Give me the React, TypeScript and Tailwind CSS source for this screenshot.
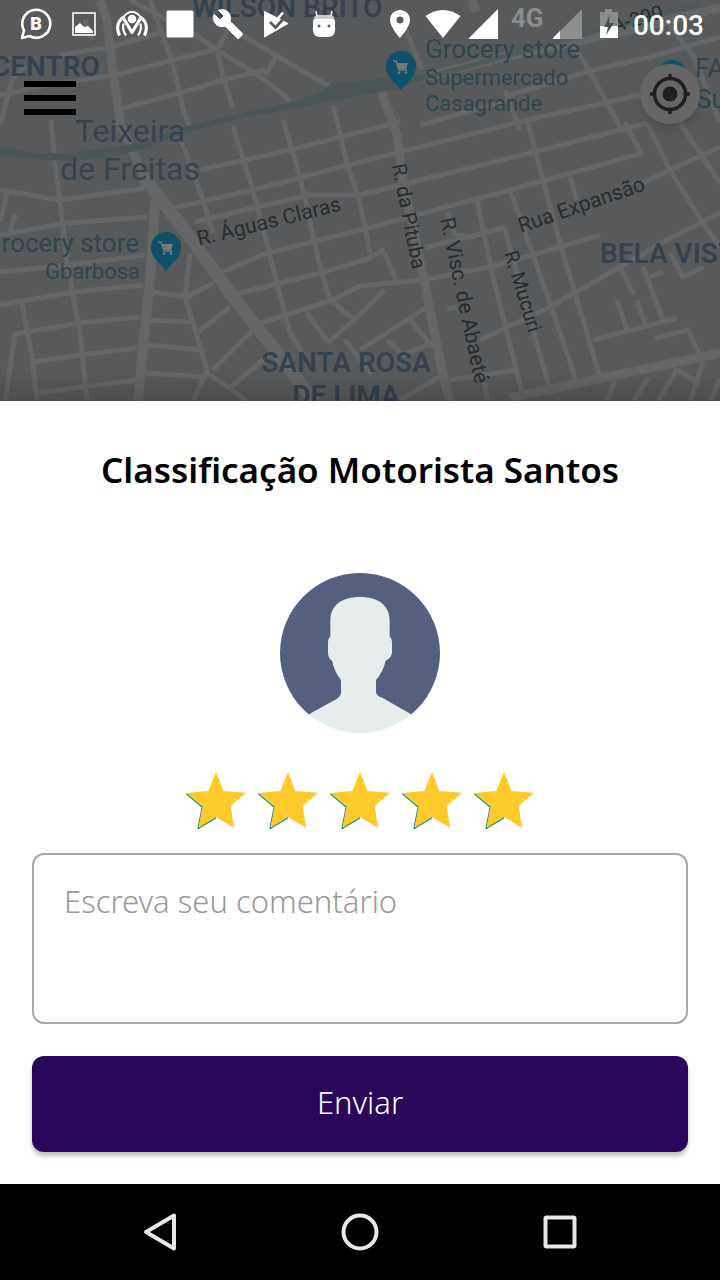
import React, { useState } from "react";

const ROADS = [
  // north west
  "M60 55 110 47 160 33",
  "M0 95 60 83 115 75 165 62 217 49",
  "M120 109 180 93 223 80 265 70",
  "M150 0 162 33 173 65 184 112 190 128",
  "M25 65 12 80 0 125",
  "M217 50 224 80 233 108",
  "M130 0 200 38 217 50 262 78 284 95 290 102",
  "M225 25 280 58 329 86 322 95",
  "M275 58 265 75",
  "M228 30 217 50",
  "M85 20 92 40",
  "M51 120 55 163 60 200 67 263 80 333 87 402",
  // west
  "M0 190 60 200 147 188",
  "M0 235 67 223 147 217",
  "M0 272 70 265 145 255",
  "M0 305 73 292 143 285",
  "M27 332 80 323 140 317",
  "M33 362 80 355 137 348",
  "M37 393 137 380",
  "M22 303 33 363 37 402",
  "M7 193 0 222",
  "M15 215 10 233",
  "M27 332 15 334 5 402",
  // centre
  "M180 137 203 200 213 233",
  "M233 127 253 190 277 283 290 333 302 352",
  "M283 120 300 177 320 267 330 300 355 320",
  "M333 105 338 125 347 163 360 203 370 253",
  "M200 170 290 150 400 122",
  "M173 208 253 190 360 162 527 120 640 95",
  "M195 222 253 208 310 195 360 195 530 153 647 123",
  "M220 273 267 253 360 230 510 190 643 153",
  "M233 295 320 273 370 258",
  "M260 323 333 300 360 286 423 280 490 267 560 247 600 235",
  "M197 333 230 307",
  "M213 370 253 330",
  "M153 292 187 297 213 283",
  "M190 253 185 297 207 370 193 402",
  "M150 320 190 322",
  "M148 345 200 350",
  "M146 373 207 377",
  "M207 373 230 388 248 402",
  "M230 388 272 352",
  "M307 313 328 342",
  "M328 343 365 310 384 290",
  "M345 340 372 375",
  "M360 350 427 307",
  "M410 320 433 347",
  "M387 340 403 355 432 343",
  "M400 400 443 375",
  "M450 380 517 370",
  "M487 402 485 383",
  "M362 262 383 250 396 280",
  "M447 309 457 307",
  // east
  "M527 120 560 243 600 377",
  "M477 200 493 277 523 397",
  "M510 190 550 303 577 383",
  "M505 230 530 320 550 390",
  "M447 212 455 235 475 237",
  "M425 248 507 227",
  "M480 340 550 307 620 267 667 240 720 213",
  "M593 340 677 318",
  "M643 183 670 170 720 147",
  "M647 123 670 170 703 223 720 247",
  "M680 123 720 183",
  "M625 122 641 153",
  "M570 177 577 200",
  "M620 267 634 295",
  "M617 300 627 330",
  "M637 300 645 325",
  "M643 267 663 320",
  "M650 277 663 272",
  "M670 253 683 277 703 267",
  "M655 338 688 330 702 360",
  "M607 402 615 380",
  "M633 402 648 378",
  "M657 402 678 368",
  "M690 402 703 362",
  "M677 370 700 384",
  "M710 402 720 378",
  // north east
  "M403 23 422 70",
  "M573 45 590 72 623 132",
  "M510 95 593 70 650 57 720 37",
  "M653 5 693 55 720 122",
  "M505 90 520 130",
  "M420 125 510 100",
];

const MAIN_ROADS = [
  "M100 0 107 20 114 80 121 125 147 183",
  "M380 88 397 135 403 180 423 275 443 375 450 402",
  "M510 398 593 380 697 358 720 353",
  "M393 85 500 58 620 32 720 8",
  "M472 0 476 12",
];

function MapPin({ x, y }: { x: number; y: number }) {
  return (
    <g transform={`translate(${x} ${y})`}>
      <path
        d="M0 21C-3 13-15 9-15-4A15 15 0 0 1 15-4C15 9 3 13 0 21Z"
        fill="#10506a"
      />
      <path
        d="M-8-9h3l3 9h8"
        fill="none"
        stroke="#74797b"
        strokeWidth="1.5"
      />
      <path d="M-4-7H7L5-1H-2Z" fill="#74797b" />
      <circle cx="-2" cy="2.500" r="1.300" fill="#74797b" />
      <circle cx="5" cy="2.500" r="1.300" fill="#74797b" />
    </g>
  );
}

function CityMap() {
  return (
    <svg
      viewBox="0 0 720 401"
      preserveAspectRatio="xMidYMin slice"
      className="absolute inset-0 h-full w-full font-[Roboto,sans-serif]"
      role="img"
      aria-label="Mapa de Teixeira de Freitas"
    >
      <defs>
        <linearGradient id="map-edge" x1="0" y1="0" x2="0" y2="1">
          <stop offset="0" stopColor="#000" stopOpacity="0" />
          <stop offset="1" stopColor="#000" stopOpacity="0.14" />
        </linearGradient>
      </defs>
      <rect width="720" height="401" fill="#58595b" />

      <g fill="none" stroke="#646566" strokeLinejoin="round">
        {ROADS.map((d) => (
          <path key={d} d={d} strokeWidth="5" />
        ))}
        {MAIN_ROADS.map((d) => (
          <path key={d} d={d} strokeWidth="9" />
        ))}
        <path d="M143 176 187 233 230 293 267 340 300 383 315 402" strokeWidth="13" />
        <path d="M156 190 150 280 143 347 138 402" strokeWidth="10" />
      </g>

      {/* River */}
      <path
        d="M0 147 35 153 70 153 110 148 140 142 183 127 240 114 297 101 320 92 333 83 362 81 386 78 440 72 440 76 392 90 362 95 330 101 300 107 240 118 185 133 140 150 110 157 70 161 40 160 0 155Z"
        fill="#4b5756"
      />
      <path
        d="M440 74 520 52 620 24 700 4"
        fill="none"
        stroke="#4f5a5a"
        strokeWidth="5"
      />

      {/* Districts */}
      <g fill="#34414e" fontSize="28" fontWeight="600">
        <text x="192" y="17">WILSON BRITO</text>
        <text x="-8" y="76">CENTRO</text>
        <text x="600" y="263">BELA VISTA</text>
        <text x="346" y="372" textAnchor="middle">SANTA ROSA</text>
        <text x="346" y="405" textAnchor="middle">DE LIMA</text>
      </g>
      <g fill="#36434f" fontSize="32" textAnchor="middle">
        <text x="130" y="142">Teixeira</text>
        <text x="130" y="180">de Freitas</text>
      </g>

      {/* Shops */}
      <g fill="#2f454f" fontSize="26">
        <text x="425" y="58">Grocery store</text>
        <text x="139" y="252" textAnchor="end">Grocery store</text>
        <text x="695" y="77">FARMA</text>
        <text x="696" y="108">Super</text>
        <g fontSize="22">
          <text x="425" y="85">Supermercado</text>
          <text x="425" y="111">Casagrande</text>
          <text x="140" y="279" textAnchor="end">Gbarbosa</text>
        </g>
      </g>
      <MapPin x={401} y={70} />
      <MapPin x={166} y={251} />
      <MapPin x={672} y={79} />

      {/* Streets */}
      <g fill="#282c2d" fontSize="21">
        <text transform="translate(199 246) rotate(-14)">R. Águas Claras</text>
        <text transform="translate(521 233) rotate(-19)">Rua Expansão</text>
        <text transform="translate(392 165) rotate(79)" fontSize="20">R. da Pituba</text>
        <text transform="translate(440 219) rotate(78)">R. Visc. de Abaeté</text>
        <text transform="translate(504 253) rotate(73)" fontSize="20">R. Mucuri</text>
        <text transform="translate(602 36) rotate(-16)" fontSize="20">BA-290</text>
      </g>
      <rect y="371" width="720" height="30" fill="url(#map-edge)" />
    </svg>
  );
}

function StatusBar() {
  return (
    <div className="flex h-12 items-center justify-between pl-3 pr-4 text-white">
      <div className="flex items-center">
        <span className="flex w-12 justify-center">
          <svg viewBox="0 0 32 32" className="size-8">
            <path
              d="M2 30l2-7.500A14 14 0 1 1 9.500 28Z"
              fill="none"
              stroke="currentColor"
              strokeWidth="2.600"
              strokeLinejoin="round"
            />
            <text
              x="16"
              y="22"
              textAnchor="middle"
              fill="currentColor"
              className="font-[Roboto,sans-serif] text-[18px] font-black"
            >
              B
            </text>
          </svg>
        </span>
        <span className="flex w-12 justify-center">
          <svg viewBox="0 0 24 24" className="size-6">
            <rect x="1" y="1" width="22" height="22" fill="none" stroke="currentColor" strokeWidth="1.600" />
            <path d="M3 21v-6l5-4 4 4 4-1 5 5v2Z" fill="currentColor" />
          </svg>
        </span>
        <span className="flex w-12 justify-center">
          <svg viewBox="0 0 32 32" className="size-8">
            <g fill="none" stroke="currentColor" strokeLinejoin="round">
              <path d="M3.500 27.500C.5 21 1 14 7 9.500L16 24.500 25 9.500C31 14 31.500 21 28.500 27.500" strokeWidth="3.200" />
              <path d="M10 27.500C7.500 24 6.500 20 7.500 15.500M22 27.500C24.500 24 25.500 20 24.500 15.500" strokeWidth="2.200" />
              <path d="M8 8.500C12 2.500 20 2.500 24 8.500" strokeWidth="1.800" />
            </g>
            <circle cx="16" cy="11" r="4.300" fill="currentColor" />
          </svg>
        </span>
        <span className="flex w-12 justify-center">
          <svg viewBox="0 0 28 28" className="size-7">
            <rect x="0.500" y="0.500" width="27" height="27" rx="1.500" fill="currentColor" />
          </svg>
        </span>
        <span className="flex w-12 justify-center">
          <svg viewBox="0 0 24 24" className="size-8">
            <path
              d="M22.700 19l-9.100-9.100c.9-2.300.4-5-1.500-6.900-2-2-5-2.400-7.400-1.300L9 6 6 9 1.600 4.700C.4 7.100.9 10.100 2.900 12.100c1.900 1.900 4.600 2.400 6.900 1.500l9.100 9.100c.4.4 1 .4 1.400 0l2.300-2.300c.5-.4.5-1.100.1-1.400z"
              fill="currentColor"
              stroke="currentColor"
              strokeWidth="0.600"
            />
          </svg>
        </span>
        <span className="flex w-12 justify-center">
          <svg viewBox="0 0 28 28" className="size-7">
            <path d="M2.500 1.500 26 13.500 2.500 27Z" fill="currentColor" stroke="currentColor" strokeLinejoin="round" />
            <path d="M8 12l5.500 5.500L25 5" fill="none" stroke="#58595b" strokeWidth="2.600" />
            <path d="M12.500 12.500 21 2.500" fill="none" stroke="currentColor" strokeWidth="2.600" />
          </svg>
        </span>
        <span className="flex w-12 justify-center">
          <svg viewBox="0 0 28 28" className="size-7">
            <path d="M7 6 6 1M21 6l1-5" stroke="currentColor" strokeWidth="1.500" />
            <path d="M4 9q0-4 4-4h12q4 0 4 4Z" fill="currentColor" opacity="0.7" />
            <path d="M3 11q0-2 2-2h18q2 0 2 2v9q0 7-7 7h-8q-7 0-7-7Z" fill="currentColor" />
            <circle cx="9" cy="16" r="1.500" fill="#58595b" />
            <circle cx="19" cy="16" r="1.500" fill="#58595b" />
          </svg>
        </span>
      </div>

      <div className="flex items-center gap-2">
        <svg viewBox="0 0 34 32" className="h-8 w-[34px]">
          <path
            d="M17 2C11.500 2 7 6.300 7 12c0 7 10 18 10 18s10-11 10-18c0-5.700-4.500-10-10-10Zm0 6.500a3.500 3.500 0 1 1 0 7 3.500 3.500 0 0 1 0-7Z"
            fill="currentColor"
          />
        </svg>
        <svg viewBox="0 0 36 32" className="h-8 w-9">
          <path d="M18 30 .5 8Q18-4 35.500 8Z" fill="currentColor" />
        </svg>
        <svg viewBox="0 0 34 32" className="h-8 w-[34px]">
          <path d="M29 1v30H-1Z" fill="currentColor" />
        </svg>
        <span className="w-[34px] pb-3 font-[Roboto,sans-serif] text-[26px] font-bold leading-6 text-[#8b8c8d]">
          4G
        </span>
        <svg viewBox="0 0 32 32" className="size-8">
          <path d="M29 1v30H-1Z" fill="#8d8e8f" />
          <path d="M7 23v8H-1Z" fill="currentColor" />
        </svg>
        <svg viewBox="0 0 32 32" className="size-8">
          <path d="M7 4h5V1h7v3h6v14H7Z" fill="#8b8c8d" />
          <path d="M7 18h18v12H7Z" fill="currentColor" />
          <path d="M17 7 11 19h4l-2 8 8-12h-5Z" fill="#4d4e50" />
        </svg>
        <time className="pt-1 font-[Roboto,sans-serif] text-[28px] font-medium leading-8">
          00:03
        </time>
      </div>
    </div>
  );
}

function Star({ filled }: { filled: boolean }) {
  return (
    <svg viewBox="0 0 180 174" className="h-[58px] w-[60px]">
      <path d="M1 68 49 108 36 173 90 140" fill="none" stroke="#128f68" strokeWidth="4" />
      <path
        d="M90 2 112 60 180 65 134 105 144 170 90 138 37 171 50 106 2 66 67 60Z"
        fill={filled ? "#fdc92b" : "#d4d4d4"}
      />
    </svg>
  );
}

function Avatar() {
  return (
    <svg viewBox="0 0 480 480" className="size-40" role="img" aria-label="Foto do motorista">
      <defs>
        <clipPath id="avatar-clip">
          <circle cx="240" cy="240" r="240" />
        </clipPath>
      </defs>
      <g clipPath="url(#avatar-clip)">
        <path d="M0 0h480v425H0Z" fill="#556080" />
        <path
          d="M240 72c-54 0-89 24-89 72v47c-5 4-7 10-7 17v30c0 12 5 22 12 25 5 22 14 42 27 58v37c0 8-4 14-12 19L84 425H0v55h480v-55h-84l-84-48c-14-6-24-10-24-22v-34c14-16 24-36 29-58 8-3 19-13 19-25v-30c0-7-2-13-7-17v-47c0-48-35-72-89-72Z"
          fill="#e7ecec"
        />
      </g>
    </svg>
  );
}

function RatingSheet() {
  const [rating, setRating] = useState(5);
  const [comment, setComment] = useState("");

  return (
    <form
      onSubmit={(e) => e.preventDefault()}
      className="flex flex-col items-center bg-white px-8 pb-8 pt-11 font-['Noto_Sans','Open_Sans',sans-serif]"
    >
      <h1 className="text-center text-[35px] font-semibold leading-[50px] text-black">
        Classificação Motorista Santos
      </h1>

      <div className="mt-[78px]">
        <Avatar />
      </div>

      <div className="mt-[38px] flex gap-3">
        {[1, 2, 3, 4, 5].map((n) => (
          <button
            key={n}
            type="button"
            aria-label={`${n} de 5 estrelas`}
            onClick={() => setRating(n)}
          >
            <Star filled={n <= rating} />
          </button>
        ))}
      </div>

      <textarea
        aria-label="Comentário"
        value={comment}
        onChange={(e) => setComment(e.target.value)}
        placeholder="Escreva seu comentário"
        rows={3}
        className="mt-6 block h-[171px] w-full resize-none rounded-xl border-2 border-[#a9a9a9] bg-white px-[30px] py-[26px] text-[31px] font-light leading-10 text-black outline-none placeholder:text-[#999]"
      />

      <button
        type="submit"
        className="mt-8 h-24 w-full rounded-xl bg-[#2a075a] pb-1 text-[31px] font-light text-white shadow-[0_4px_4px_rgba(0,0,0,0.25)]"
      >
        Enviar
      </button>
    </form>
  );
}

function NavigationBar() {
  return (
    <nav className="flex h-24 items-center justify-center gap-40 bg-black text-[#e8e8e8]">
      <button type="button" aria-label="Voltar">
        <svg viewBox="0 0 40 40" className="size-10" fill="none" stroke="currentColor" strokeWidth="4" strokeLinejoin="round">
          <path d="M6 20 34 3.500v33Z" />
        </svg>
      </button>
      <button type="button" aria-label="Início">
        <svg viewBox="0 0 40 40" className="size-10" fill="none" stroke="currentColor" strokeWidth="4">
          <circle cx="20" cy="20" r="16.500" />
        </svg>
      </button>
      <button type="button" aria-label="Recentes">
        <svg viewBox="0 0 40 40" className="size-10" fill="none" stroke="currentColor" strokeWidth="4">
          <rect x="5.500" y="5.500" width="29" height="29" rx="1" />
        </svg>
      </button>
    </nav>
  );
}

function App() {
  return (
    <div className="flex min-h-screen flex-col bg-white">
      <section className="relative min-h-80 flex-1 overflow-hidden bg-[#58595b]">
        <CityMap />
        <div className="relative">
          <StatusBar />
          <div className="flex items-start justify-between pl-6 pr-5 pt-4">
            <button type="button" aria-label="Menu" className="flex flex-col gap-2 py-[17px]">
              <span className="h-1.5 w-13 bg-black" />
              <span className="h-1.5 w-13 bg-black" />
              <span className="h-1.5 w-13 bg-black" />
            </button>
            <button
              type="button"
              aria-label="Minha localização"
              className="flex size-15 items-center justify-center rounded-full bg-[#666667] shadow-lg"
            >
              <svg viewBox="0 0 40 40" className="size-10" fill="none" stroke="#1f1f20" strokeWidth="3.500">
                <circle cx="20" cy="20" r="15.500" />
                <circle cx="20" cy="20" r="7.500" fill="#1f1f20" stroke="none" />
                <path d="M20 0v6M20 34v6M0 20h6M34 20h6" />
              </svg>
            </button>
          </div>
        </div>
      </section>
      <RatingSheet />
      <NavigationBar />
    </div>
  );
}

export default App;
